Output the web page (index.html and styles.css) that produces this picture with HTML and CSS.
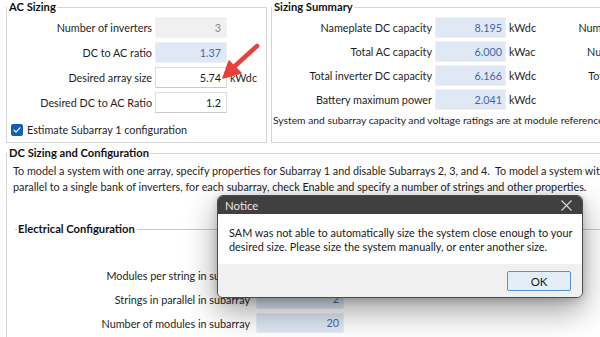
FILE: index.html
```html
<!DOCTYPE html>
<html lang="en">
<head>
<meta charset="utf-8">
<title>SAM - System Design</title>
<link rel="stylesheet" href="styles.css">
</head>
<body>
<div class="app">
  <div class="top">
    <fieldset class="group ac">
      <legend>AC Sizing</legend>
      <div class="form ac-form">
        <label>Number of inverters</label><div class="field ro">3</div><span class="unit"></span>
        <label>DC to AC ratio</label><div class="field calc">1.37</div><span class="unit"></span>
        <label>Desired array size</label><div class="field input">5.74</div><span class="unit">kWdc</span>
        <label>Desired DC to AC Ratio</label><div class="field input">1.2</div><span class="unit"></span>
      </div>
      <div class="check">
        <span class="box"><svg width="12" height="12" viewBox="0 0 12 12"><path d="M3 6.2 L5 8.2 L9 3.8" fill="none" stroke="#fff" stroke-width="1.2" stroke-linecap="round" stroke-linejoin="round"/></svg></span>
        <span>Estimate Subarray 1 configuration</span>
      </div>
    </fieldset>
    <fieldset class="group summary">
      <legend>Sizing Summary</legend>
      <div class="form sum-form">
        <label>Nameplate DC capacity</label><div class="field calc">8.195</div><span class="unit">kWdc</span><label class="right">Number of modules</label>
        <label>Total AC capacity</label><div class="field calc">6.000</div><span class="unit">kWac</span><label class="right">Number of strings</label>
        <label>Total inverter DC capacity</label><div class="field calc">6.166</div><span class="unit">kWdc</span><label class="right">Total module area</label>
        <label>Battery maximum power</label><div class="field calc">2.041</div><span class="unit">kWdc</span><span></span>
      </div>
      <p class="note">System and subarray capacity and voltage ratings are at module reference conditions shown on the Module page.</p>
    </fieldset>
  </div>
  <fieldset class="group dc">
    <legend>DC Sizing and Configuration</legend>
    <p class="intro">To model a system with one array, specify properties for Subarray 1 and disable Subarrays 2, 3, and 4.&nbsp; To model a system with multiple arrays connected in<br>parallel to a single bank of inverters, for each subarray, check Enable and specify a number of strings and other properties.</p>
    <div class="subhead">Electrical Configuration</div>
    <div class="form elec-form">
      <label>Modules per string in subarray</label><div class="field calc">10</div>
      <label>Strings in parallel in subarray</label><div class="field calc">2</div>
      <label>Number of modules in subarray</label><div class="field calc">20</div>
    </div>
  </fieldset>
</div>

<svg class="arrow" width="600" height="337" viewBox="0 0 600 337">
  <line x1="257" y1="46" x2="235" y2="66" stroke="#e8413c" stroke-width="4.5" stroke-linecap="round"/>
  <polygon points="223,78 229,61 241,73" fill="#e8413c" stroke="#e8413c" stroke-width="1.5" stroke-linejoin="round"/>
</svg>

<div class="dialog">
  <div class="dlg-title">
    <span>Notice</span>
    <svg class="close" width="11" height="11" viewBox="0 0 11 11"><path d="M0.5 0.5 L10.5 10.5 M10.5 0.5 L0.5 10.5" stroke="#d8d8d8" stroke-width="1.1"/></svg>
  </div>
  <div class="dlg-body">SAM was not able to automatically size the system close enough to your<br>desired size. Please size the system manually, or enter another size.</div>
  <div class="dlg-foot"><button class="ok">OK</button></div>
</div>
</body>
</html>
```

FILE: styles.css
```css
* { box-sizing: border-box; }
html, body { margin: 0; padding: 0; }
body {
  width: 600px;
  height: 337px;
  overflow: hidden;
  background: #ffffff;
  font-family: Lato, "Noto Sans", sans-serif;
  font-size: 10.8px;
  color: #1e1e1e;
  position: relative;
}
.app { width: 600px; }
.top {
  display: flex;
  gap: 4px;
  padding-left: 6px;
}
.group {
  margin: 0;
  padding: 0;
  border: 1px solid #d6d6d6;
  min-width: 0;
}
.group legend {
  font-weight: 700;
  font-size: 11.2px;
  line-height: 14px;
  padding: 0 1px 0 2px;
  margin-left: 0;
  color: #111;
}
.ac { width: 261px; height: 143px; flex: none; }
.summary { width: 420px; height: 143px; flex: none; }

.form {
  display: grid;
  align-items: center;
}
.form label { text-align: right; white-space: nowrap; }
.field {
  height: 21px;
  line-height: 19px;
  text-align: right;
  padding-right: 5px;
  border: 1px solid transparent;
}
.field.ro { background: #f0f0f0; color: #8a8a8a; border-color: #f4f4f4; }
.field.calc { background: #dfe8f4; color: #4467ae; border-color: #eaf0f8; }
.field.input { background: #fff; border: 1px solid #dcdcdc; border-bottom-color: #c8c8c8; color: #1e1e1e; }
.unit { white-space: nowrap; }

.ac-form {
  grid-template-columns: 145px 72px auto;
  column-gap: 3px;
  row-gap: 4px;
  padding-top: 3px;
}
.check {
  display: flex;
  align-items: center;
  gap: 4px;
  margin: 10px 0 0 4px;
  height: 13px;
}
.check .box {
  width: 12px;
  height: 12px;
  border-radius: 2px;
  background: #0f5fb5;
  display: flex;
}

.sum-form {
  grid-template-columns: 160px 71px 40px 120px;
  column-gap: 3px;
  row-gap: 3px;
  padding-top: 3px;
}
.sum-form .field { padding-right: 3px; }
.sum-form .right { text-align: right; }
.note {
  margin: 3px 0 0 1px;
  line-height: 14px;
  white-space: nowrap;
  font-size: 10.3px;
}

.dc {
  width: 700px;
  height: 300px;
  margin: 3px 0 0 6px;
}
.intro {
  margin: 3px 0 0 6px;
  line-height: 16px;
  white-space: nowrap;
}
.subhead {
  display: flex;
  align-items: center;
  margin: 27px 0 0 8px;
  font-weight: 700;
  line-height: 14px;
  font-size: 11.2px;
  color: #111;
}
.subhead::before {
  content: "";
  width: 2px;
  border-top: 1px solid #c8c8c8;
  margin-right: 1px;
}
.subhead::after {
  content: "";
  flex: 1;
  border-top: 1px solid #c8c8c8;
  margin-left: 2px;
}
.elec-form {
  grid-template-columns: 243px 88px;
  column-gap: 6px;
  row-gap: 4px;
  padding-top: 29px;
}
.elec-form .field { height: 20px; line-height: 18px; padding-right: 4px; }

.arrow {
  position: absolute;
  left: 0;
  top: 0;
  pointer-events: none;
}

.dialog {
  position: absolute;
  left: 217px;
  top: 195px;
  width: 366px;
  height: 103px;
  border: 1px solid #4a4a4a;
  border-radius: 6px;
  overflow: hidden;
  background: #fff;
  box-shadow: 0 12px 32px rgba(0, 0, 0, 0.4), 0 2px 8px rgba(0, 0, 0, 0.18);
  display: flex;
  flex-direction: column;
}
.dlg-title {
  height: 18px;
  background: #404040;
  color: #e8e8e8;
  display: flex;
  align-items: center;
  justify-content: space-between;
  padding: 0 10px 0 7px;
  font-size: 11.4px;
}
.dlg-body {
  flex: 1;
  padding: 12px 0 0 11px;
  line-height: 14px;
  font-size: 10.9px;
  white-space: nowrap;
  color: #1a1a1a;
}
.dlg-foot {
  height: 33px;
  background: #f0f0f0;
  display: flex;
  justify-content: flex-end;
  align-items: flex-start;
  padding: 7px 11px 0 0;
}
.ok {
  width: 64px;
  height: 20px;
  font-family: inherit;
  font-size: 11.4px;
  background: #e3eef9;
  border: 1px solid #4f93d8;
  border-radius: 2px;
  color: #1a1a1a;
  padding: 0;
}
```
